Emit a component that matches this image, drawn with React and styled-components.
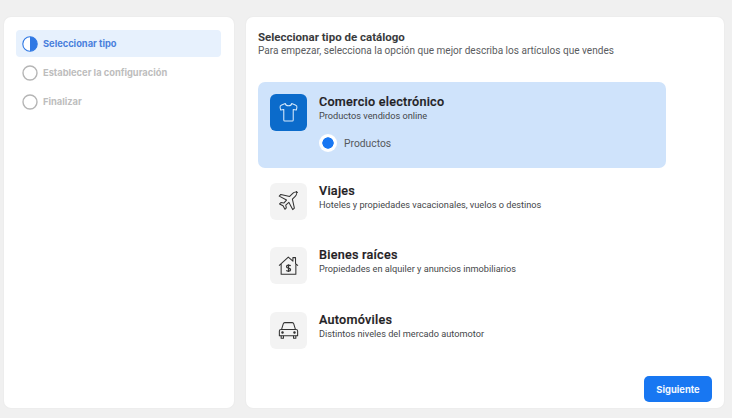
import styled, { createGlobalStyle } from "styled-components";

const GlobalStyle = createGlobalStyle`
  html, body {
    margin: 0;
    padding: 0;
    background: #f0f0f0;
    font-family: Roboto, "Liberation Sans", sans-serif;
  }
`;

const Page = styled.div`
  display: flex;
  gap: 12px;
  width: 732px;
  height: 418px;
  box-sizing: border-box;
  padding: 17px 8px 10px 4px;
  overflow: hidden;
`;

const Card = styled.div`
  background: #fff;
  border-radius: 7px;
  box-shadow: 0 0 2px rgba(0, 0, 0, 0.06);
  box-sizing: border-box;
`;

const Sidebar = styled(Card)`
  width: 230px;
  padding: 13px 13px 0 12px;
`;

const Step = styled.div`
  display: flex;
  align-items: center;
  gap: 5px;
  height: 27px;
  margin-bottom: 2px;
  padding-left: 6px;
  border-radius: 4px;
  background: ${(p) => (p.$active ? "#e7f1fd" : "transparent")};
  color: ${(p) => (p.$active ? "#4a7fdc" : "#bdbdbd")};
  font-family: Inter, sans-serif;
  font-size: 9.3px;
  font-weight: 700;
`;

const Main = styled(Card)`
  position: relative;
  flex: 1;
  padding: 13px 12px 0;
`;

const Title = styled.div`
  color: #3a3b3d;
  font-size: 11.5px;
  line-height: 14px;
  font-weight: 700;
`;

const Subtitle = styled.div`
  color: #5a5c60;
  font-size: 10.05px;
  line-height: 13px;
`;

const Options = styled.div`
  display: flex;
  flex-direction: column;
  width: 408px;
  margin-top: 25px;
`;

const Option = styled.div`
  display: flex;
  gap: 12px;
  box-sizing: border-box;
  height: ${(p) => (p.$selected ? "86px" : "64.4px")};
  padding: 12px;
  border-radius: 7px;
  background: ${(p) => (p.$selected ? "#cfe3fb" : "transparent")};
  margin-bottom: ${(p) => (p.$selected ? "3px" : "0")};
`;

const IconTile = styled.div`
  display: flex;
  align-items: center;
  justify-content: center;
  flex: none;
  width: 37px;
  height: 37px;
  border-radius: 6px;
  background: ${(p) => (p.$selected ? "#0b6bcb" : "#f3f3f3")};
  color: ${(p) => (p.$selected ? "#d7e9fb" : "#333")};
`;

const OptionBody = styled.div`
  display: flex;
  flex-direction: column;
`;

const OptionTitle = styled.div`
  color: #1f2124;
  font-size: 12.6px;
  line-height: 15px;
  font-weight: 500;
  letter-spacing: 0.25px;
  -webkit-text-stroke: 0.2px #1f2124;
`;

const OptionText = styled.div`
  color: #45474a;
  font-size: 9.2px;
  line-height: 13px;
`;

const RadioRow = styled.div`
  display: flex;
  align-items: center;
  gap: 7px;
  margin-top: 12px;
  color: #55585c;
  font-size: 10.3px;
`;

const Radio = styled.span`
  flex: none;
  box-sizing: border-box;
  width: 18px;
  height: 18px;
  border-radius: 50%;
  background: radial-gradient(circle, #1877f2 0 5.4px, #fff 5.9px);
`;

const NextButton = styled.button`
  position: absolute;
  right: 12px;
  bottom: 6px;
  width: 68px;
  height: 26px;
  border: 0;
  border-radius: 5px;
  background: #1877f2;
  color: #f2f7fe;
  font-family: Inter, sans-serif;
  font-size: 9.4px;
  font-weight: 700;
`;

const HalfCircle = () => (
  <svg width="16" height="16" viewBox="0 0 16 16">
    <circle cx="8" cy="8" r="7.2" fill="#fff" stroke="#2f78e4" strokeWidth="1.1" />
    <path d="M8 .8a7.2 7.2 0 0 1 0 14.4z" fill="#2f78e4" />
  </svg>
);

const EmptyCircle = () => (
  <svg width="16" height="16" viewBox="0 0 16 16">
    <circle cx="8" cy="8" r="7" fill="none" stroke="#b5b5b5" strokeWidth="1.4" />
  </svg>
);

const ShirtIcon = () => (
  <svg width="21" height="21" viewBox="0 0 20 20" fill="none" stroke="currentColor" strokeWidth="1" strokeLinejoin="round">
    <path d="M7 1.500 3.500 2.800C2.300 3.300 1.700 4.200 2 5.300l.6 2.400 2.900-.6v10c0 .6.400 1 1 1h7c.6 0 1-.4 1-1v-10l2.900.6.600-2.400c.3-1.100-.3-2-1.500-2.500L13 1.500c-.4 2.700-5.600 2.700-6 0Z" />
  </svg>
);

const PlaneIcon = () => (
  <svg width="21" height="21" viewBox="0 0 20 20" fill="none" stroke="currentColor" strokeWidth="1" strokeLinejoin="round">
    <path d="M18.500 1.500c-1.200-.8-3.500-.2-4.700 1l-2.700 2.700-8.400-1.900-1.500 1.600 6.900 3.700-2.600 2.900-2.700-.5-1.300 1.300 3.300 1.800 1.800 3.300 1.300-1.300-.5-2.700 2.900-2.600 3.700 6.900 1.600-1.500-1.900-8.400 2.700-2.700c1.200-1.200 1.800-3.500 1-4.700Z" />
  </svg>
);

const HouseIcon = () => (
  <svg width="21" height="21" viewBox="0 0 20 20" fill="none" stroke="currentColor" strokeWidth="1" strokeLinejoin="round">
    <path d="M1 10.200 9.800 2l4.400 3.900V2.500h2.500v5.700l2.300 2M3 8.500v9.800h14V8.500" />
    <path d="M12 10.400c-.5-.9-3.900-1.100-3.900.7 0 1.900 3.900 1 3.900 2.900 0 1.800-3.400 1.600-4 .6M10 8.800v7.400" strokeWidth="1.15" />
  </svg>
);

const CarIcon = () => (
  <svg width="21" height="21" viewBox="0 0 20 20" fill="none" stroke="currentColor" strokeWidth="1" strokeLinejoin="round">
    <path d="M3.400 9 5 3.600c.2-.7.700-1.100 1.400-1.100h7.200c.7 0 1.200.4 1.400 1.100L16.600 9" />
    <path d="M1.300 10.500c0-.9.600-1.500 1.500-1.500h14.400c.9 0 1.500.6 1.500 1.500V15H1.300Z" />
    <path d="M3 15v2.300h2.200V15M14.800 15v2.300H17V15" />
    <circle cx="4.300" cy="12" r=".7" fill="currentColor" />
    <circle cx="15.700" cy="12" r=".7" fill="currentColor" />
  </svg>
);

const options = [
  { title: "Viajes", text: "Hoteles y propiedades vacacionales, vuelos o destinos", icon: <PlaneIcon /> },
  { title: "Bienes raíces", text: "Propiedades en alquiler y anuncios inmobiliarios", icon: <HouseIcon /> },
  { title: "Automóviles", text: "Distintos niveles del mercado automotor", icon: <CarIcon /> },
];

const App = () => {
  return (
    <Page>
      <GlobalStyle />
      <Sidebar>
        <Step $active><HalfCircle />Seleccionar tipo</Step>
        <Step><EmptyCircle />Establecer la configuración</Step>
        <Step><EmptyCircle />Finalizar</Step>
      </Sidebar>
      <Main>
        <Title>Seleccionar tipo de catálogo</Title>
        <Subtitle>Para empezar, selecciona la opción que mejor describa los artículos que vendes</Subtitle>
        <Options>
          <Option $selected>
            <IconTile $selected><ShirtIcon /></IconTile>
            <OptionBody>
              <OptionTitle>Comercio electrónico</OptionTitle>
              <OptionText>Productos vendidos online</OptionText>
              <RadioRow><Radio />Productos</RadioRow>
            </OptionBody>
          </Option>
          {options.map((o) => (
            <Option key={o.title}>
              <IconTile>{o.icon}</IconTile>
              <OptionBody>
                <OptionTitle>{o.title}</OptionTitle>
                <OptionText>{o.text}</OptionText>
              </OptionBody>
            </Option>
          ))}
        </Options>
        <NextButton>Siguiente</NextButton>
      </Main>
    </Page>
  );
};

export default App;
